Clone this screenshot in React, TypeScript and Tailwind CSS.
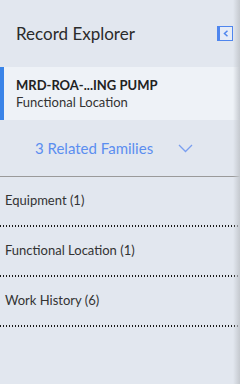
export default function App() {
  const families = ["Equipment (1)", "Functional Location (1)", "Work History (6)"];

  return (
    <div
      className="relative h-[384px] w-[240px] overflow-hidden bg-[#e2e7ef] text-[#2b2b2b]"
      style={{ fontFamily: "Lato, 'Noto Sans', sans-serif" }}
    >
      {/* Right edge shadow */}
      <div className="absolute right-0 top-0 h-full w-[7px] bg-gradient-to-r from-transparent to-[#c5c9cf]" />

      {/* Header */}
      <div className="flex h-[67px] items-center justify-between pl-4 pr-[7px]">
        <h1 className="text-[17px] leading-none">Record Explorer</h1>
        <button className="flex h-[15px] w-[16px] items-center justify-center border border-l-[3px] border-[#4f86ee] bg-[#e6ecf7]">
          <svg width="6" height="7" viewBox="0 0 6 7">
            <path d="M4.5 0.8 L1.5 3.5 L4.5 6.2" fill="none" stroke="#4f86ee" strokeWidth="1.5" />
          </svg>
        </button>
      </div>

      {/* Selected record */}
      <div className="flex h-[53px] flex-col justify-center border-l-4 border-[#3a84e8] bg-[#eef2f7] pl-3">
        <p className="text-[13px] font-bold leading-[17px] text-[#222]">MRD-ROA-...ING PUMP</p>
        <p className="text-[13px] leading-[17px] text-[#333]">Functional Location</p>
      </div>

      {/* Related families toggle */}
      <div className="flex h-[57px] items-center border-b border-[#9a9a9a] pl-[35px]">
        <span className="text-[15px] text-[#5b8ef0]">3 Related Families</span>
        <svg className="ml-[25px]" width="15" height="9" viewBox="0 0 15 9">
          <path d="M1 1 L7.5 7.5 L14 1" fill="none" stroke="#7a9ff0" strokeWidth="1.3" />
        </svg>
      </div>

      {/* Family list */}
      <ul>
        {families.map((f) => (
          <li key={f} className="flex h-[50px] flex-col">
            <span className="flex flex-1 items-center pl-[5px] text-[13px] text-[#333]">{f}</span>
            <div className="h-[2px] bg-[linear-gradient(to_right,#1a1a1a_50%,transparent_50%)] bg-[length:3px_2px] bg-repeat-x" />
          </li>
        ))}
      </ul>
    </div>
  );
}
